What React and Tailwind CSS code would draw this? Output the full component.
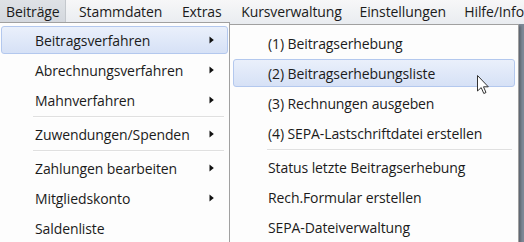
import React from "react";

const font = { fontFamily: '"Open Sans", "Noto Sans", sans-serif' };

function Arrow() {
  return (
    <svg width="5" height="8" viewBox="0 0 5 8" className="shrink-0">
      <path d="M0.5 0.5 L4.8 4 L0.5 7.5 Z" fill="#111" />
    </svg>
  );
}

function Item({ label, arrow, active, pl }) {
  return (
    <div className="h-[30px] px-[1px] py-[1px]">
      <div
        className={
          "flex h-full items-center justify-between rounded-[3px] border pr-[13px] " +
          (active
            ? "border-[#b3c8ee] bg-gradient-to-b from-[#eaf0fb] to-[#d6e1f6]"
            : "border-transparent")
        }
        style={{ paddingLeft: pl }}
      >
        <span className="whitespace-nowrap">{label}</span>
        {arrow ? <Arrow /> : null}
      </div>
    </div>
  );
}

function Sep({ ml, mr }) {
  return (
    <div className="flex h-[4px] flex-col justify-center" style={{ marginLeft: ml, marginRight: mr }}>
      <div className="h-px bg-[#e0e0e0]" />
      <div className="h-px bg-white" />
    </div>
  );
}

export default function App() {
  return (
    <div
      className="relative h-[242px] w-[524px] overflow-hidden bg-[#7d8896] text-[14px] tracking-[-0.1px] text-[#1b1b1b]"
      style={font}
    >
      {/* Menu bar */}
      <div className="flex h-[24px] items-start bg-gradient-to-b from-[#f7f7f8] to-[#e9ecf0]">
        <div className="flex h-[22px] w-[68px] items-center border-r border-[#c4c8cd] bg-gradient-to-b from-[#dfe2e6] to-[#d4d8de] pl-[6px]">
          Beiträge
        </div>
        <div className="flex h-[22px] w-[112px] items-center pl-[13px]">Stammdaten</div>
        <div className="flex h-[22px] w-[61px] items-center pl-[7px]">Extras</div>
        <div className="flex h-[22px] w-[122px] items-center pl-[7px]">Kursverwaltung</div>
        <div className="flex h-[22px] w-[108px] items-center pl-[7px]">Einstellungen</div>
        <div className="flex h-[22px] items-center whitespace-nowrap pl-[7px]">Hilfe/Info</div>
      </div>

      {/* Main dropdown */}
      <div className="absolute left-0 top-[22px] w-[230px] border border-l-0 border-[#a0a0a0] bg-[#fdfdfd] pb-[4px] pt-[2px]">
        <Item label="Beitragsverfahren" arrow active pl={33} />
        <Item label="Abrechnungsverfahren" arrow pl={33} />
        <Item label="Mahnverfahren" arrow pl={33} />
        <Sep ml={33} mr={5} />
        <Item label="Zuwendungen/Spenden" arrow pl={33} />
        <Sep ml={33} mr={5} />
        <Item label="Zahlungen bearbeiten" arrow pl={33} />
        <Item label="Mitgliedskonto" arrow pl={33} />
        <Item label="Saldenliste" pl={33} />
      </div>

      {/* Submenu */}
      <div className="absolute left-[229px] top-[24px] w-[290px] border border-[#a0a0a0] bg-[#fdfdfd] px-[2px] pb-[4px] pt-[3px] shadow-[2px_2px_2px_rgba(0,0,0,0.25)]">
        <Item label="(1) Beitragserhebung" pl={34} />
        <Item label="(2) Beitragserhebungsliste" active pl={34} />
        <Item label="(3) Rechnungen ausgeben" pl={34} />
        <Item label="(4) SEPA-Lastschriftdatei erstellen" pl={34} />
        <Sep ml={35} mr={4} />
        <Item label="Status letzte Beitragserhebung" pl={34} />
        <Item label="Rech.Formular erstellen" pl={34} />
        <Item label="SEPA-Dateiverwaltung" pl={34} />
      </div>

      {/* Mouse cursor */}
      <svg className="absolute left-[477px] top-[75px]" width="13" height="20" viewBox="0 0 13 20">
        <path
          d="M0.5 0.5 L0.5 16 L4.2 12.6 L6.8 18.5 L9 17.5 L6.5 11.8 L11.3 11.8 Z"
          fill="#fff"
          stroke="#333"
          strokeWidth="1"
          strokeLinejoin="round"
        />
      </svg>
    </div>
  );
}
